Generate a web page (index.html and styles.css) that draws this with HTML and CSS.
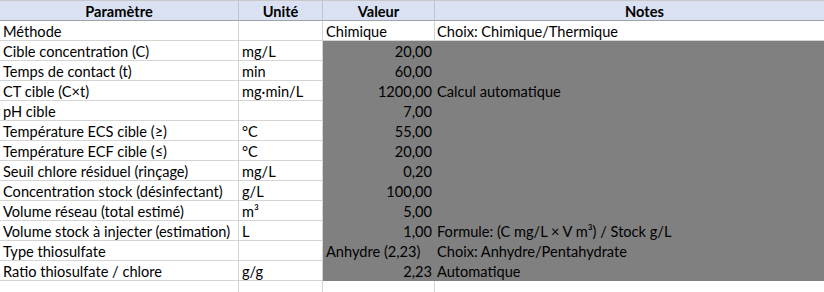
FILE: index.html
```html
<!DOCTYPE html>
<html lang="fr">
<head>
<meta charset="utf-8">
<title>Paramètres</title>
<link rel="stylesheet" href="styles.css">
</head>
<body>
<div class="sheet">
  <div class="c hdr">Paramètre</div><div class="c hdr">Unité</div><div class="c hdr">Valeur</div><div class="c hdr">Notes</div>

  <div class="c">Méthode</div><div class="c"></div><div class="c">Chimique</div><div class="c note">Choix: Chimique/Thermique</div>

  <div class="c">Cible concentration (C)</div><div class="c">mg/L</div><div class="c g num">20,00</div><div class="c g note"></div>
  <div class="c">Temps de contact (t)</div><div class="c">min</div><div class="c g num">60,00</div><div class="c g note"></div>
  <div class="c">CT cible (C×t)</div><div class="c">mg·min/L</div><div class="c g num">1200,00</div><div class="c g note">Calcul automatique</div>
  <div class="c">pH cible</div><div class="c"></div><div class="c g num">7,00</div><div class="c g note"></div>
  <div class="c">Température ECS cible (≥)</div><div class="c">°C</div><div class="c g num">55,00</div><div class="c g note"></div>
  <div class="c">Température ECF cible (≤)</div><div class="c">°C</div><div class="c g num">20,00</div><div class="c g note"></div>
  <div class="c">Seuil chlore résiduel (rinçage)</div><div class="c">mg/L</div><div class="c g num">0,20</div><div class="c g note"></div>
  <div class="c">Concentration stock (désinfectant)</div><div class="c">g/L</div><div class="c g num">100,00</div><div class="c g note"></div>
  <div class="c">Volume réseau (total estimé)</div><div class="c">m³</div><div class="c g num">5,00</div><div class="c g note"></div>
  <div class="c">Volume stock à injecter (estimation)</div><div class="c">L</div><div class="c g num">1,00</div><div class="c g note">Formule: (C mg/L × V m³) / Stock g/L</div>
  <div class="c">Type thiosulfate</div><div class="c"></div><div class="c g">Anhydre (2,23)</div><div class="c g note">Choix: Anhydre/Pentahydrate</div>
  <div class="c">Ratio thiosulfate / chlore</div><div class="c">g/g</div><div class="c g num">2,23</div><div class="c g note">Automatique</div>

  <div class="c"></div><div class="c"></div><div class="c"></div><div class="c"></div>
</div>
</body>
</html>
```

FILE: styles.css
```css
html, body {
  margin: 0;
  padding: 0;
  background: #ffffff;
  overflow: hidden;
}

body {
  width: 824px;
  height: 292px;
  font-family: Lato, "Open Sans", sans-serif;
  font-size: 14.6px;
  color: #000000;
}

.sheet {
  display: grid;
  grid-template-columns: 239px 84px 112px 420px;
  grid-auto-rows: 20px;
  border-top: 1px solid #c8c8c8;
  width: 855px;
}

.c {
  box-sizing: border-box;
  border-right: 1px solid #d4d4d4;
  border-bottom: 1px solid #d4d4d4;
  padding: 1px 3px 0 3px;
  line-height: 19px;
  white-space: nowrap;
  overflow: hidden;
}

.hdr {
  background: #d9e1f2;
  font-weight: 700;
  text-align: center;
  border-right-color: #c0c4cc;
  border-bottom-color: #9fa3a8;
}

.g {
  background: #808080;
  border-color: #808080;
}

.num {
  text-align: right;
  padding-right: 2px;
}

.note {
  padding-left: 2px;
}
```
